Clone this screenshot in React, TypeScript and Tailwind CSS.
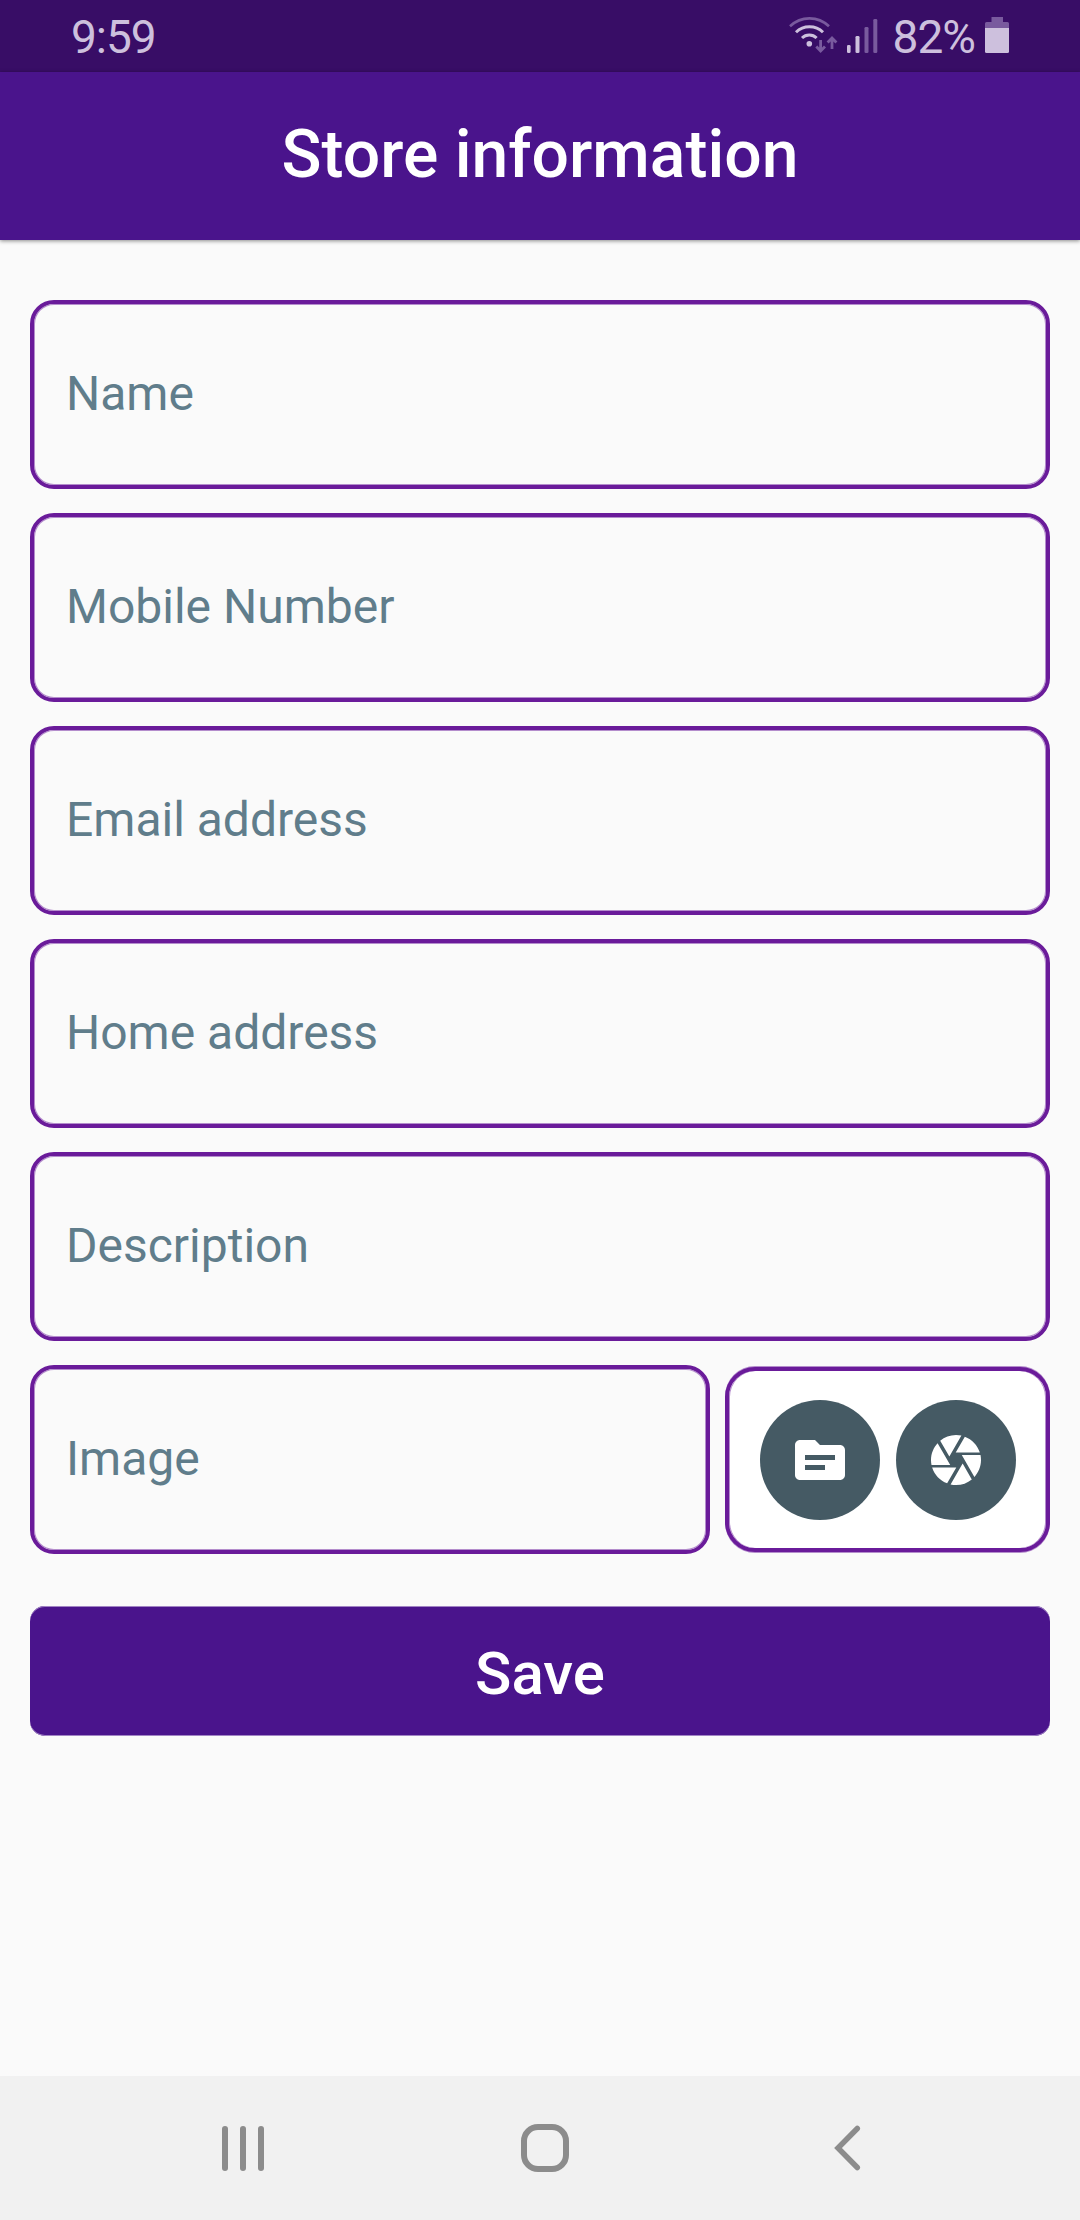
const fields = ['Name', 'Mobile Number', 'Email address', 'Home address', 'Description'];

function Field({ label, className }: { label: string; className: string }) {
  return (
    <div className={`flex h-[189px] items-center rounded-[24px] border-[4px] border-[#6a1b9a] pl-[32px] shadow-[inset_0_0_0_1px_#b48dcc] ${className}`}>
      <span className="whitespace-nowrap pb-[1px] text-[48px] leading-none text-[#607d8b]">{label}</span>
    </div>
  );
}

function StatusIcons() {
  return (
    <svg className="h-[72px] w-[92px]" viewBox="788 0 92 72" fill="none" strokeLinecap="butt">
      <path d="M790 26.3C801 15.7 818 15.7 829 26.3" stroke="#795a9e" strokeWidth="2.6" />
      <path d="M796 32.3C803.5 25 815.500 25 823 32.300" stroke="#cdc0dd" strokeWidth="3" />
      <path d="M802 38C806 34 812.600 34 816.600 38" stroke="#cdc0dd" strokeWidth="3" />
      <circle cx="809.3" cy="43.700" r="2.800" fill="#cdc0dd" />
      <path d="M820.600 40V50.500M816.300 46.500L820.600 51L825 46.500M832 49V38.500M827.600 42.500L832 38L836.400 42.500" stroke="#795a9e" strokeWidth="2.800" />
      <rect x="847" y="45" width="3.600" height="8" rx="1.300" fill="#cdc0dd" />
      <rect x="855.500" y="36" width="4" height="17" rx="1.300" fill="#cdc0dd" />
      <rect x="864.500" y="27" width="4" height="26" rx="1.300" fill="#795a9e" />
      <rect x="873.300" y="19" width="4" height="34" rx="1.300" fill="#795a9e" />
    </svg>
  );
}

function Battery() {
  return (
    <svg className="h-[36px] w-[24px]" viewBox="0 0 24 36">
      <path d="M6.500 0H18V5H22.500Q24 5 24 6.500V11H0V6.500Q0 5 1.500 5H6.500Z" fill="#795a9e" />
      <path d="M0 11H24V34.500Q24 36 22.500 36H1.500Q0 36 0 34.500Z" fill="#cdc0dd" />
    </svg>
  );
}

export default function App() {
  return (
    <div className="flex h-[2220px] w-[1080px] flex-col overflow-hidden bg-[#fafafa] font-['Roboto',sans-serif]">
      <div className="flex h-[72px] items-center bg-[#380d66] pl-[71px] pr-[71px] text-[#cdc0dd]">
        <span className="pt-px text-[46px] leading-none tracking-[-1px]">9:59</span>
        <div className="ml-auto flex items-center">
          <StatusIcons />
          <span className="ml-[13px] pt-px text-[46px] leading-none tracking-[-1px]">82%</span>
          <span className="ml-[10px] flex pb-[2px]"><Battery /></span>
        </div>
      </div>
      <header className="z-10 flex h-[168px] items-center justify-center bg-[#4a148c] shadow-[0_1px_4px_rgba(0,0,0,0.45)]">
        <h1 className="whitespace-nowrap pb-[2px] text-[66px] font-medium leading-none text-white">Store information</h1>
      </header>
      <main className="flex grow flex-col px-[30px] pt-[60px]">
        <div className="flex flex-col gap-[24px]">
          {fields.map((label) => (
            <Field key={label} label={label} className="w-full" />
          ))}
          <div className="flex items-center">
            <Field label="Image" className="w-[680px]" />
            <div className="ml-[15px] flex h-[185px] w-[325px] items-center justify-center gap-[16px] rounded-[30px] border-[4px] border-[#6a1b9a] bg-white shadow-[inset_1px_0_0_#b48dcc,inset_-1px_0_0_#b48dcc,0_-1px_0_#b48dcc,0_1px_0_#b48dcc]">
              <button className="flex size-[120px] items-center justify-center rounded-full bg-[#455a64]">
                <svg className="size-[60px]" viewBox="0 0 24 24" fill="#fff">
                  <path d="M20 6h-8l-2-2H4c-1.100 0-1.990.9-1.990 2L2 18c0 1.100.9 2 2 2h16c1.100 0 2-.9 2-2V8c0-1.100-.9-2-2-2zm-6 10H6v-2h8v2zm4-4H6v-2h12v2z" />
                </svg>
              </button>
              <button className="flex size-[120px] items-center justify-center rounded-full bg-[#455a64]">
                <svg className="size-[60px]" viewBox="0 0 24 24" fill="#fff">
                  <path d="M9.400 10.500l4.770-8.260C13.470 2.090 12.750 2 12 2c-2.400 0-4.600.85-6.320 2.250l3.660 6.350.06-.1zM21.540 9c-.92-2.920-3.150-5.260-6-6.340L11.880 9h9.660zm.26 1h-7.490l.29.5 4.760 8.250C21 16.970 22 14.610 22 12c0-.69-.07-1.350-.2-2zM8.540 12l-3.900-6.750C3.010 7.030 2 9.390 2 12c0 .69.07 1.350.2 2h7.490l-1.150-2zm-6.080 3c.92 2.920 3.150 5.260 6 6.340L12.120 15H2.460zm11.270 0l-3.900 6.760c.7.15 1.420.24 2.170.24 2.400 0 4.600-.85 6.320-2.250l-3.660-6.350-.93 1.600z" />
                </svg>
              </button>
            </div>
          </div>
        </div>
        <button className="mt-[52px] flex h-[130px] items-center justify-center rounded-[15px] bg-[#4a148c] shadow-[inset_0_1px_0_#a184c4,inset_0_-1px_0_#a184c4]">
          <span className="pt-[5px] text-[60px] font-medium leading-none text-white">Save</span>
        </button>
      </main>
      <nav className="flex h-[144px] shrink-0 items-center bg-[#f1f1f1] pl-[222px]">
        <div className="flex gap-[12px]">
          <span className="h-[45px] w-[6px] rounded-full bg-[#8c8c8c]" />
          <span className="h-[45px] w-[6px] rounded-full bg-[#8c8c8c]" />
          <span className="h-[45px] w-[6px] rounded-full bg-[#8c8c8c]" />
        </div>
        <span className="ml-[257px] size-[48px] rounded-[17px] border-[6px] border-[#8c8c8c]" />
        <svg className="ml-[264px] h-[48px] w-[30px]" viewBox="0 0 30 48" fill="none" stroke="#8c8c8c" strokeWidth="5.500">
          <path d="M24.300 4.500L5 24L24.300 43.500" strokeLinecap="round" strokeLinejoin="miter" />
        </svg>
      </nav>
    </div>
  );
}
